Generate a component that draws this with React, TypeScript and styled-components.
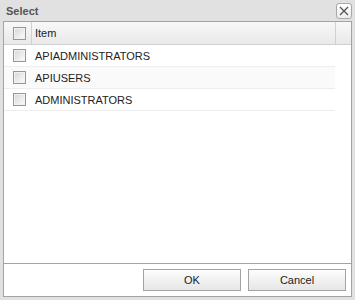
import React, { useState } from 'react';
import styled, { createGlobalStyle } from 'styled-components';

const GlobalStyle = createGlobalStyle`
  html, body {
    margin: 0;
    padding: 0;
    background: #ffffff;
  }
  body {
    font-family: 'Liberation Sans', Arial, sans-serif;
    font-size: 11px;
    color: #222;
  }
`;

const Window = styled.div`
  width: 355px;
  height: 300px;
  box-sizing: border-box;
  background: #e1e1e1;
  padding: 0 3px 3px 3px;
  display: flex;
  flex-direction: column;
`;

const TitleBar = styled.div`
  height: 21px;
  display: flex;
  align-items: center;
  justify-content: space-between;
  padding-left: 3px;
`;

const Title = styled.span`
  font-weight: bold;
  font-size: 11px;
  color: #555;
`;

const CloseButton = styled.button`
  width: 16px;
  height: 16px;
  margin-top: 1px;
  padding: 0;
  border: 1px solid #a9a9a9;
  border-radius: 3px;
  background: linear-gradient(#ffffff, #ececec);
  display: flex;
  align-items: center;
  justify-content: center;
  box-sizing: border-box;
`;

const Body = styled.div`
  flex: 1;
  background: #ffffff;
  border: 1px solid #a3a3a3;
  display: flex;
  flex-direction: column;
`;

const Grid = styled.div`
  flex: 1;
  border-bottom: 1px solid #a3a3a3;
  display: flex;
  flex-direction: column;
`;

const HeaderRow = styled.div`
  height: 22px;
  display: flex;
  background: linear-gradient(#f8f8f8, #e9e9e9);
  border-bottom: 1px solid #d0d0d0;
`;

const CheckCell = styled.div<{ header?: boolean }>`
  width: 28px;
  box-sizing: border-box;
  padding-left: 9px;
  display: flex;
  align-items: center;
  border-right: 1px solid ${(p) => (p.header ? '#d0d0d0' : 'transparent')};
`;

const TextCell = styled.div<{ header?: boolean }>`
  flex: 1;
  padding-left: 3px;
  display: flex;
  align-items: center;
  border-right: ${(p) => (p.header ? '1px solid #d0d0d0' : 'none')};
  color: #222;
`;

const Filler = styled.div`
  width: 15px;
`;

const Rows = styled.div`
  margin-right: 16px;
`;

const Row = styled.div<{ alt?: boolean }>`
  height: 21px;
  display: flex;
  background: ${(p) => (p.alt ? '#fafafa' : '#ffffff')};
  border-bottom: 1px solid #ededed;
`;

const Box = styled.span`
  width: 13px;
  height: 13px;
  box-sizing: border-box;
  border: 1px solid #979797;
  background: linear-gradient(135deg, #d6d6d6, #fdfdfd);
  box-shadow: inset 0 0 0 1px #f2f2f2;
  display: flex;
  align-items: center;
  justify-content: center;
  font-size: 10px;
  line-height: 1;
  color: #333;
`;

const Footer = styled.div`
  height: 32px;
  display: flex;
  justify-content: flex-end;
  align-items: flex-start;
  gap: 7px;
  padding: 5px 5px 0 0;
  box-sizing: border-box;
`;

const Button = styled.button`
  width: 98px;
  height: 22px;
  box-sizing: border-box;
  border: 1px solid #a3a3a3;
  background: linear-gradient(#fdfdfd, #e6e6e6);
  font-family: 'Liberation Sans', Arial, sans-serif;
  font-size: 11px;
  color: #222;
  padding: 0;
`;

const items = ['APIADMINISTRATORS', 'APIUSERS', 'ADMINISTRATORS'];

const CheckBox: React.FC<{ checked: boolean; onClick: () => void }> = ({ checked, onClick }) => (
  <Box onClick={onClick}>{checked ? '✓' : ''}</Box>
);

const App: React.FC = () => {
  const [checked, setChecked] = useState<boolean[]>(items.map(() => false));
  const all = checked.every(Boolean);

  return (
    <>
      <GlobalStyle />
      <Window>
        <TitleBar>
          <Title>Select</Title>
          <CloseButton aria-label="close">
            <svg width="10" height="10" viewBox="0 0 10 10">
              <path d="M1 1L9 9M9 1L1 9" stroke="#555" strokeWidth="1.3" />
            </svg>
          </CloseButton>
        </TitleBar>
        <Body>
          <Grid>
            <HeaderRow>
              <CheckCell header>
                <CheckBox checked={all} onClick={() => setChecked(items.map(() => !all))} />
              </CheckCell>
              <TextCell header>Item</TextCell>
              <Filler />
            </HeaderRow>
            <Rows>
              {items.map((item, i) => (
                <Row key={item} alt={i % 2 === 1}>
                  <CheckCell>
                    <CheckBox
                      checked={checked[i]}
                      onClick={() => setChecked(checked.map((c, j) => (j === i ? !c : c)))}
                    />
                  </CheckCell>
                  <TextCell>{item}</TextCell>
                </Row>
              ))}
            </Rows>
          </Grid>
          <Footer>
            <Button>OK</Button>
            <Button>Cancel</Button>
          </Footer>
        </Body>
      </Window>
    </>
  );
};

export default App;
